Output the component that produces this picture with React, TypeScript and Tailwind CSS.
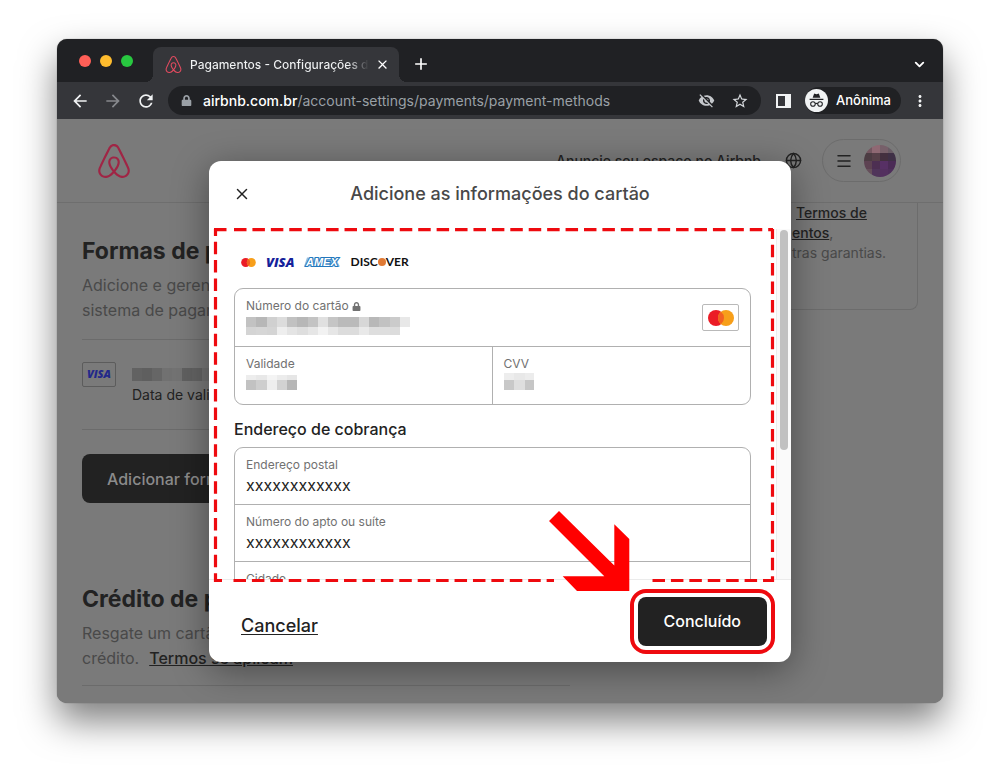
import type { ReactNode } from "react";
import { FaLock } from "react-icons/fa";
import {
  MdAdd,
  MdArrowBack,
  MdArrowForward,
  MdClose,
  MdMoreVert,
  MdRefresh,
  MdStarBorder,
  MdVisibilityOff,
} from "react-icons/md";
import { SiAirbnb } from "react-icons/si";
import { ChevronDown, Globe, Menu, X } from "lucide-react";

type MosaicProps = { rows: string[][]; cell: number; heights: number[]; className?: string };

function Mosaic({ rows, cell, heights, className }: MosaicProps) {
  const width = Math.max(...rows.map((r) => r.length)) * cell;
  const height = heights.reduce((a, b) => a + b, 0);
  return (
    <svg width={width} height={height} shapeRendering="crispEdges" className={className} aria-hidden="true">
      {rows.map((row, y) =>
        row.map((fill, x) => (
          <rect
            key={`${y}-${x}`}
            x={x * cell}
            y={heights.slice(0, y).reduce((a, b) => a + b, 0)}
            width={cell}
            height={heights[y]}
            fill={fill}
          />
        )),
      )}
    </svg>
  );
}

function Mastercard({ className }: { className: string }) {
  return (
    <svg viewBox="0 0 26 16" className={className} role="img" aria-label="Mastercard">
      <circle cx="8" cy="8" r="8" fill="#eb1c26" />
      <circle cx="18" cy="8" r="8" fill="#f79f1a" />
      <path d="M13 1.76a8 8 0 0 1 0 12.48a8 8 0 0 1 0-12.48z" fill="#f26122" />
    </svg>
  );
}

function Visa({ className }: { className: string }) {
  return <span className={`font-['Open_Sans'] font-extrabold italic ${className}`}>VISA</span>;
}

function Amex() {
  return (
    <svg width="38" height="12" viewBox="0 0 38 12" aria-label="Amex">
      <path d="M4 1.500h33l-2.500 4.500 2.500 4.500H1z" fill="#8fbfe4" />
      <text
        x="3"
        y="10"
        className="font-['Liberation_Sans'] text-[11px] font-bold italic"
        fill="#ffffff"
        stroke="#2478bd"
        strokeWidth="2"
        paintOrder="stroke"
      >
        AMEX
      </text>
    </svg>
  );
}

function Incognito() {
  return (
    <svg viewBox="0 0 24 24" className="size-[23px]" aria-hidden="true">
      <circle cx="12" cy="12" r="12" fill="#f1f3f4" />
      <path d="M8 9.200 9.300 5.400q.3-.8 1-.5l1.700.5 1.700-.5q.8-.3 1 .5L16 9.200z" fill="#202124" />
      <path d="M4.800 10.200h14.400v1.200H4.800z" fill="#202124" />
      <g fill="none" stroke="#202124" strokeWidth="1.1">
        <circle cx="8.300" cy="15.700" r="2.400" />
        <circle cx="15.700" cy="15.700" r="2.400" />
        <path d="M10.700 15.400q1.300-.8 2.600 0" />
      </g>
    </svg>
  );
}

function BrowserBar() {
  return (
    <header className="font-[Inter,sans-serif]">
      <div className="flex h-[43px] items-end bg-[#202124] pr-4">
        <div className="flex h-full w-24 items-center gap-[9px] pl-[22px]">
          <span className="size-3 rounded-full bg-[#ff5f57]" />
          <span className="size-3 rounded-full bg-[#febc2e]" />
          <span className="size-3 rounded-full bg-[#28c840]" />
        </div>
        <div className="relative flex h-[35px] w-[246px] items-center rounded-t-lg bg-[#35363a] pr-[9px] pl-3 text-white">
          <span className="absolute bottom-0 -left-2 size-2 bg-[radial-gradient(circle_at_0_0,transparent_8px,#35363a_8px)]" />
          <span className="absolute -right-2 bottom-0 size-2 bg-[radial-gradient(circle_at_100%_0,transparent_8px,#35363a_8px)]" />
          <SiAirbnb className="size-[17px] shrink-0 text-[#e04a5f]" />
          <span className="ml-2 flex-1 overflow-hidden bg-linear-to-r from-[#f1f3f4] from-88% to-[#35363a] bg-clip-text text-[12px] font-medium whitespace-nowrap text-transparent">
            Pagamentos - Configurações da conta
          </span>
          <button aria-label="Fechar guia" className="ml-1.5">
            <MdClose className="size-[15px]" />
          </button>
        </div>
        <button aria-label="Nova guia" className="mb-2 ml-3 text-white">
          <MdAdd className="size-5" />
        </button>
        <button aria-label="Pesquisar guias" className="mb-2.5 ml-auto text-white">
          <ChevronDown className="size-[15px]" strokeWidth={3} />
        </button>
      </div>
      <div className="flex h-[37px] items-center bg-[#35363a] px-3.5 text-[#f1f3f4]">
        <button aria-label="Voltar" className="-ml-px">
          <MdArrowBack className="size-5" />
        </button>
        <button aria-label="Avançar" className="ml-[13px] text-[#86888c]">
          <MdArrowForward className="size-5" />
        </button>
        <button aria-label="Recarregar" className="ml-[13px]">
          <MdRefresh className="size-5" />
        </button>
        <div className="ml-3 flex h-[29px] min-w-0 flex-1 items-center rounded-full bg-[#202124] px-3">
          <FaLock className="mx-px size-[11px] text-[#9aa0a6]" />
          <a href="#url" className="ml-2.5 flex-1 truncate text-sm text-[#9aa0a6]">
            <span className="font-medium text-white">airbnb.com.br</span>/account-settings/payments/payment-methods
          </a>
          <MdVisibilityOff className="size-[17px] text-[#c4c7cb]" />
          <MdStarBorder className="ml-4 size-[18px] text-[#d5d8dc]" />
        </div>
        <svg width="15" height="14" className="ml-[15px]" aria-hidden="true">
          <path d="M0 0h15v14H0zM2 2v10h7V2z" fillRule="evenodd" fill="#f1f3f4" />
        </svg>
        <div className="ml-3.5 flex h-[27px] items-center gap-2 rounded-full bg-[#202124] pr-2.5 text-[13px] font-medium text-white">
          <Incognito />
          Anônima
        </div>
        <MdMoreVert className="ml-2.5 size-[18px]" />
      </div>
    </header>
  );
}

const avatar = [
  ["#745660", "#8f6873", "#77606a", "#685b64"],
  ["#4c3c43", "#574049", "#43303f", "#3f3046"],
  ["#5d4252", "#4d2f52", "#573065", "#4b2b56"],
  ["#66505b", "#50355a", "#53305f", "#4e2e5b"],
];

function AccountPage() {
  return (
    <div className="bg-[#7a7a7a] pb-[17px] text-[#222222]">
      <nav className="flex h-21 items-center border-b border-[#6e6e6e] pr-[42px] pl-10">
        <SiAirbnb className="size-[34px] text-[#a02545]" />
        <a href="#host" className="ml-auto text-sm font-medium">
          Anuncie seu espaço no Airbnb
        </a>
        <Globe className="ml-6 size-[17px]" strokeWidth={2} />
        <div className="ml-5 flex h-[43px] w-[79px] items-center justify-between rounded-full border border-[#6c6c6c] pr-1 pl-3">
          <Menu className="size-[18px]" strokeWidth={2} />
          <Mosaic rows={avatar} cell={8} heights={[8, 8, 8, 8]} className="rounded-full" />
        </div>
      </nav>
      <div className="flex items-start justify-between px-[25px]">
        <main className="w-[488px]">
          <h2 className="mt-8 text-[23px] leading-8 font-bold">Formas de pagamento</h2>
          <p className="mt-1.5 text-base leading-[25px] text-[#494949]">
            Adicione e gerencie as formas de pagamento
            <br />
            sistema de pagamento seguro.
          </p>
          <hr className="mt-4 border-[#6b6b6b]" />
          <div className="mt-[22px] flex gap-4">
            <span className="flex h-[25px] w-[34px] items-center justify-center rounded-xs border border-[#5c5c5c]">
              <Visa className="text-[11px] text-[#23298a]" />
            </span>
            <div className="pt-1.5 text-sm leading-5">
              <Mosaic
                rows={[["#626262", "#5f5f5f", "#666666", "#717171", "#737373", "#616161", "#646464", "#727272"]]}
                cell={10}
                heights={[13]}
              />
              <p className="mt-1">Data de validade</p>
            </div>
          </div>
          <hr className="mt-6 border-[#6b6b6b]" />
          <button className="mt-6 h-[49px] rounded-lg bg-[#222222] px-[25px] text-base font-medium text-[#8b8b8b]">
            Adicionar forma de pagamento
          </button>
          <h2 className="mt-20 text-[23px] leading-8 font-bold">Crédito de presente</h2>
          <p className="mt-1.5 text-base leading-[25px] text-[#494949]">
            Resgate um cartão-presente e adicione
            <br />
            crédito.
            <a href="#termos" className="ml-2.5 font-medium text-[#222222] underline">
              Termos se aplicam
            </a>
          </p>
          <hr className="mt-3.5 border-[#6b6b6b]" />
        </main>
        <aside className="h-[107px] w-[200px] rounded-br-lg border-r border-b border-[#6c6c6c] pl-[74px] text-sm leading-5 text-[#494949]">
          <a href="#servico" className="ml-1 font-medium text-[#222222] underline">
            Termos de
          </a>
          <br />
          <a href="#pagamentos" className="font-medium text-[#222222] underline">
            entos
          </a>
          ,
          <br />
          tras garantias.
        </aside>
      </div>
    </div>
  );
}

function Field({ id, label, children }: { id: string; label: ReactNode; children: ReactNode }) {
  return (
    <div className="h-[57px] px-[11px] pt-2">
      <label htmlFor={id} className="flex items-center gap-[3px] text-xs leading-[18px] text-[#717171]">
        {label}
      </label>
      {children}
    </div>
  );
}

const fieldInput = "block w-full bg-transparent text-base leading-[22px] text-[#222222] outline-none";

const numberMosaic = [
  ["#c2c2c2", "#b7b7b7", "#d0d0d0", "#dcdcdc", "#c1c1c1", "#b7b7b7", "#c3c3c3", "#e0e0e0", "#c5c5c5", "#bababa", "#bababa", "#d7d7d7", "#b8b8b8", "#c2c2c2", "#cbcbcb", "#e8e8e8"],
  ["#d4d4d4", "#d6d6d6", "#d4d4d4", "#eeeeee", "#e4e4e4", "#dedede", "#e6e6e6", "#f2f2f2", "#e6e6e6", "#dcdcdc", "#dcdcdc", "#e9e9e9", "#dedede", "#dedede", "#dcdcdc"],
];

function PaymentDialog() {
  return (
    <section
      role="dialog"
      aria-label="Adicione as informações do cartão"
      className="relative w-[582px] rounded-xl bg-white text-[#222222] shadow-[0_8px_36px_rgba(0,0,0,0.4)]"
    >
      <div className="flex h-[66px] items-center px-6">
        <button aria-label="Fechar">
          <X className="size-[18px]" strokeWidth={2} />
        </button>
        <h1 className="flex-1 pr-[18px] text-center text-lg font-medium text-[#484848]">
          Adicione as informações do cartão
        </h1>
      </div>
      <div className="mt-0.5 flex h-[351px] overflow-hidden border-b border-[#ebebeb]">
        <form className="flex-1 px-[25px]">
          <div className="mt-6 flex h-[18px] items-center gap-2.5 pl-[7px]">
            <Mastercard className="h-[9px] w-[15px]" />
            <Visa className="text-[13px] leading-4 text-[#14219a]" />
            <span className="-ml-0.5">
              <Amex />
            </span>
            <span className="flex items-center font-[Lato] text-xs font-bold text-[#111111]">
              DISC
              <span className="size-2 rounded-full bg-[#e07a35]" />
              VER
            </span>
          </div>
          <div className="mt-[17px] rounded-[9px] border border-[#b0b0b0]">
            <div className="flex items-center justify-between border-b border-[#b0b0b0] pr-[11px]">
              <Field
                id="numero"
                label={
                  <>
                    Número do cartão
                    <FaLock className="size-[9px]" />
                  </>
                }
              >
                <div className="relative">
                  <input id="numero" className={fieldInput} />
                  <Mosaic rows={numberMosaic} cell={10.25} heights={[10, 8]} className="absolute top-0.5 left-0" />
                </div>
              </Field>
              <span className="flex h-[27px] w-[37px] items-center justify-center rounded-xs border border-[#b9b9b9]">
                <Mastercard className="h-4 w-[26px]" />
              </span>
            </div>
            <div className="grid grid-cols-2 divide-x divide-[#b0b0b0]">
              <Field id="validade" label="Validade">
                <div className="relative">
                  <input id="validade" className={fieldInput} />
                  <Mosaic
                    rows={[
                      ["#ededed", "#e8e8e8", "#f4f4f4", "#ececec", "#e6e6e6"],
                      ["#c2c2c2", "#cecece", "#eeeeee", "#d2d2d2", "#b6b6b6"],
                    ]}
                    cell={10.25}
                    heights={[5, 10]}
                    className="absolute top-0.5 left-0"
                  />
                </div>
              </Field>
              <Field id="cvv" label="CVV">
                <div className="relative">
                  <input id="cvv" className={fieldInput} />
                  <Mosaic
                    rows={[
                      ["#ededed", "#e8e8e8", "#ececec"],
                      ["#c8c8c8", "#dedede", "#c6c6c6"],
                    ]}
                    cell={10.25}
                    heights={[7, 10]}
                    className="absolute top-0 left-0"
                  />
                </div>
              </Field>
            </div>
          </div>
          <h2 className="mt-3 leading-6 font-medium">Endereço de cobrança</h2>
          <div className="mt-1.5 divide-y divide-[#b0b0b0] rounded-t-[9px] border border-[#b0b0b0]">
            <Field id="endereco" label="Endereço postal">
              <input id="endereco" className={fieldInput} defaultValue="xxxxxxxxxxxx" />
            </Field>
            <Field id="apto" label="Número do apto ou suíte">
              <input id="apto" className={fieldInput} defaultValue="xxxxxxxxxxxx" />
            </Field>
            <Field id="cidade" label="Cidade">
              <input id="cidade" className={fieldInput} />
            </Field>
          </div>
        </form>
        <div className="w-[15px] border-l border-[#ececec] bg-[#fafafa] pt-px pl-[3px]">
          <div className="h-[220px] w-2 rounded-full bg-[#c1c1c1]" />
        </div>
      </div>
      <div className="flex h-[82px] items-center justify-between pr-6 pl-8">
        <button className="pt-2.5 text-lg font-medium underline underline-offset-2">Cancelar</button>
        <button className="h-[49px] rounded-lg bg-[#222222] px-[26px] text-base font-medium text-white outline-4 outline-offset-4 outline-[#ee0a0f]">
          Concluído
        </button>
      </div>
      <svg viewBox="0 0 582 501" className="pointer-events-none absolute inset-0 size-full" aria-hidden="true">
        <g fill="none" stroke="#ee0a0f" strokeWidth="3.2">
          <path d="M5 68.700H19M25 68.700H564" strokeDasharray="12.500 5.920" />
          <path d="M6.500 68V75M6.500 80.700V421" strokeDasharray="12.500 5.920" />
          <path d="M563.500 68V78M563.500 83.700V421" strokeDasharray="12.500 5.920" />
          <path d="M5 419.500H13M24.500 419.500H345M443.500 419.500H565" strokeDasharray="12.500 5.920" />
        </g>
        <path
          d="M350 350 340 360 395.300 415.300H353.700L368 430H420.300V378L405.300 363.300V404.500z"
          fill="#ff0000"
        />
      </svg>
    </section>
  );
}

export default function App() {
  return (
    <div className="min-h-screen bg-white px-[57px] py-[39px]">
      <div className="overflow-hidden rounded-[10px] bg-[#7a7a7a] shadow-[0_0_1px_rgba(0,0,0,0.6),0_18px_36px_rgba(0,0,0,0.5)]">
        <BrowserBar />
        <div className="relative overflow-hidden font-[Inter,sans-serif]">
          <AccountPage />
          <div className="absolute inset-0 flex items-start justify-center pt-[42px]">
            <PaymentDialog />
          </div>
        </div>
      </div>
    </div>
  );
}
